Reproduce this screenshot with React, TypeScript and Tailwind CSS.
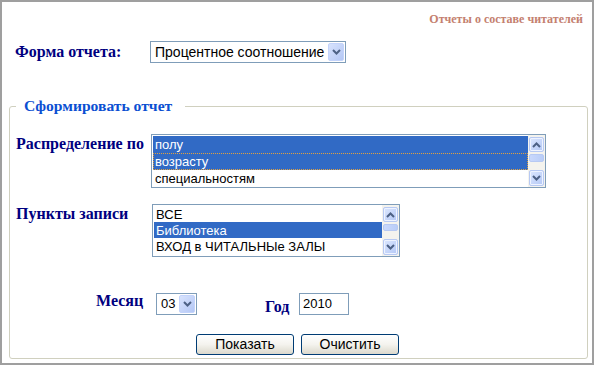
import React from "react";

const Chevron = ({ up = false }: { up?: boolean }) => (
  <svg width="9" height="6" viewBox="0 0 9 6" className="block">
    <path
      d={up ? "M1 5 L4.5 1.5 L8 5" : "M1 1 L4.5 4.5 L8 1"}
      fill="none"
      stroke="#4d6185"
      strokeWidth="2"
    />
  </svg>
);

const XpBtn = ({ up = false, h = 16 }: { up?: boolean; h?: number }) => (
  <div
    className="w-[15px] flex items-center justify-center rounded-[2px] border border-[#b7c9f3] bg-gradient-to-br from-[#dce7fe] to-[#b4c8f6] shadow-[inset_0_0_0_1px_#eef3ff]"
    style={{ height: h }}
  >
    <Chevron up={up} />
  </div>
);

type ListProps = {
  width: number;
  height: number;
  rowH: number;
  items: string[];
  selected: number[];
  focus: number;
  thumbTop: number;
  thumbH: number;
};

const ListBox = ({ width, height, rowH, items, selected, focus, thumbTop, thumbH }: ListProps) => (
  <div
    className="border border-[#7f9db9] bg-white flex"
    style={{ width, height }}
  >
    <div className="flex-1 pt-[1px] pl-[1px] overflow-hidden">
      {items.map((it, i) => {
        const sel = selected.includes(i);
        return (
          <div
            key={i}
            className={
              "pl-[1px] leading-[16px] text-[13px] font-['Liberation_Sans',Arial,sans-serif] whitespace-nowrap " +
              (sel ? "bg-[#316ac5] text-white " : "text-black ") +
              (i === focus ? "border border-dotted border-[#e0a040]" : "border border-transparent")
            }
            style={{ height: rowH }}
          >
            {it}
          </div>
        );
      })}
    </div>
    <div className="w-[17px] bg-[#f4f3ee] flex flex-col items-center pt-[2px] pb-[1px] relative">
      <XpBtn up h={15} />
      <div className="flex-1 w-full relative">
        <div
          className="absolute left-[1px] w-[15px] rounded-[2px] border border-[#b7c9f3] bg-gradient-to-r from-[#c9d8fc] to-[#b9cdf8]"
          style={{ top: thumbTop, height: thumbH }}
        />
      </div>
      <XpBtn h={16} />
    </div>
  </div>
);

const SelectBox = ({ width, value, big = false }: { width: number; value: string; big?: boolean }) => (
  <div
    className={
      "h-[22px] border border-[#7f9db9] bg-white flex items-center pl-[4px] pr-[1px] font-['Liberation_Sans',Arial,sans-serif] text-black " +
      (big ? "text-[14px]" : "text-[13px]")
    }
    style={{ width }}
  >
    <span className="flex-1 whitespace-nowrap">{value}</span>
    <div className="w-[16px] h-[18px] flex items-center justify-center rounded-[2px] border border-[#c3d3fb] bg-gradient-to-br from-[#d8e3fd] to-[#b4c7f5]">
      <Chevron />
    </div>
  </div>
);

const Button = ({ label }: { label: string }) => (
  <div className="w-[98px] h-[21px] rounded-[3px] border border-[#003c74] bg-gradient-to-b from-[#ffffff] via-[#f4f3ee] to-[#dcd9cc] flex items-center justify-center font-['Liberation_Sans',Arial,sans-serif] text-[14px] text-black">
    {label}
  </div>
);

const label = "font-['Liberation_Serif','Times_New_Roman',serif] font-bold text-[16px] leading-[18px] text-[#000080] whitespace-nowrap";

export default function App() {
  return (
    <div className="w-[594px] h-[365px] border-2 border-[#9f9f9f] bg-white overflow-hidden">
      <div className="flex justify-end pr-[9px] pt-[10px]">
        <span className="font-['Liberation_Serif','Times_New_Roman',serif] font-bold text-[12px] leading-[15px] text-[#c4806f]">
          Отчеты о составе читателей
        </span>
      </div>

      <div className="flex items-center mt-[14px] pl-[13px]">
        <div className={label + " w-[135px]"}>Форма отчета:</div>
        <SelectBox width={196} value="Процентное соотношение" big />
      </div>

      <fieldset className="ml-[7px] mt-[34px] w-[579px] border border-[#d0d0bf] rounded-[3px] pb-[3px]">
        <legend className="ml-[6px] pl-[8px] pr-[13px] font-['Liberation_Serif','Times_New_Roman',serif] font-bold text-[15.6px] leading-[18px] text-[#0b4fd2]">
          Сформировать отчет
        </legend>

        <div className="flex items-start mt-[19px]">
          <div className={label + " w-[141px] pl-[6px] pt-[1px]"}>Распределение по</div>
          <ListBox
            width={395}
            height={54}
            rowH={17}
            items={["полу", "возрасту", "специальностям"]}
            selected={[0, 1]}
            focus={1}
            thumbTop={2}
            thumbH={8}
          />
        </div>

        <div className="flex items-start mt-[16px]">
          <div className={label + " w-[142px] pl-[6px] pt-[1px]"}>Пункты записи</div>
          <ListBox
            width={248}
            height={53}
            rowH={16}
            items={["ВСЕ", "Библиотека", "ВХОД в ЧИТАЛЬНЫе ЗАЛЫ"]}
            selected={[1]}
            focus={-1}
            thumbTop={2}
            thumbH={7}
          />
        </div>

        <div className="flex items-start mt-[36px] pl-[86px]">
          <div className={label + " mt-[-1px] w-[60px]"}>Месяц</div>
          <SelectBox width={41} value="03" />
          <div className={label + " mt-[5px] ml-[68px] w-[34px]"}>Год</div>
          <div className="w-[50px] h-[22px] border border-[#7f9db9] bg-white pl-[3px] flex items-center font-['Liberation_Sans',Arial,sans-serif] text-[13px] text-black">
            2010
          </div>
        </div>

        <div className="flex gap-[7px] mt-[18px] pl-[186px]">
          <Button label="Показать" />
          <Button label="Очистить" />
        </div>
      </fieldset>
    </div>
  );
}
